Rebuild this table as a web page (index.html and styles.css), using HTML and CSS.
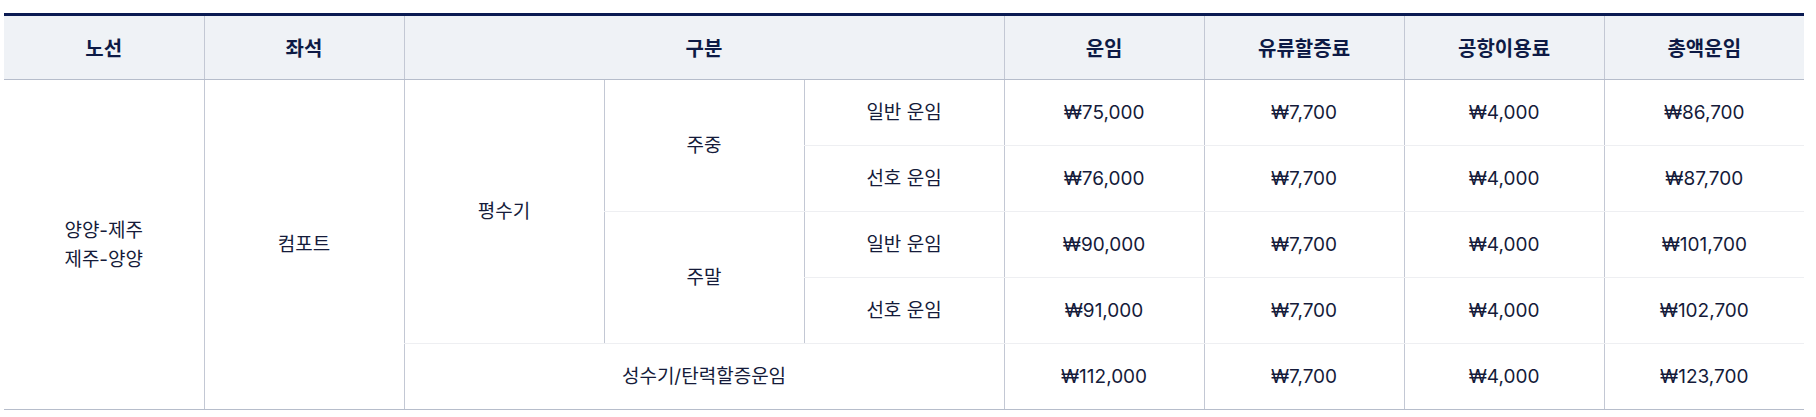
FILE: index.html
```html
<!DOCTYPE html>
<html lang="ko">
<head>
<meta charset="utf-8">
<link rel="stylesheet" href="styles.css">
</head>
<body>
<div class="wrap">
<table class="fare">
  <colgroup>
    <col><col><col><col><col><col><col><col><col>
  </colgroup>
  <thead>
    <tr>
      <th>노선</th>
      <th>좌석</th>
      <th colspan="3">구분</th>
      <th>운임</th>
      <th>유류할증료</th>
      <th>공항이용료</th>
      <th>총액운임</th>
    </tr>
  </thead>
  <tbody>
    <tr>
      <td rowspan="5" class="strong-bottom first">양양-제주<br>제주-양양</td>
      <td rowspan="5" class="strong-bottom">컴포트</td>
      <td rowspan="4">평수기</td>
      <td rowspan="2">주중</td>
      <td>일반 운임</td>
      <td>₩75,000</td>
      <td>₩7,700</td>
      <td>₩4,000</td>
      <td>₩86,700</td>
    </tr>
    <tr>
      <td>선호 운임</td>
      <td>₩76,000</td>
      <td>₩7,700</td>
      <td>₩4,000</td>
      <td>₩87,700</td>
    </tr>
    <tr>
      <td rowspan="2">주말</td>
      <td>일반 운임</td>
      <td>₩90,000</td>
      <td>₩7,700</td>
      <td>₩4,000</td>
      <td>₩101,700</td>
    </tr>
    <tr>
      <td>선호 운임</td>
      <td>₩91,000</td>
      <td>₩7,700</td>
      <td>₩4,000</td>
      <td>₩102,700</td>
    </tr>
    <tr class="last">
      <td colspan="3">성수기/탄력할증운임</td>
      <td>₩112,000</td>
      <td>₩7,700</td>
      <td>₩4,000</td>
      <td>₩123,700</td>
    </tr>
  </tbody>
</table>
</div>
</body>
</html>
```

FILE: styles.css
```css
html, body {
  margin: 0;
  padding: 0;
  background: #ffffff;
}

.wrap {
  padding: 13px 0 0 4px;
}

.fare {
  width: 1800px;
  table-layout: fixed;
  border-collapse: collapse;
  border-top: 3px solid #0a1a52;
  font-family: "Inter", "Noto Sans CJK KR", sans-serif;
  font-size: 19px;
  color: #151b3a;
  letter-spacing: 0;
}

.fare col {
  width: 200px;
}

.fare th {
  height: 63px;
  padding: 0;
  background: #eff2f6;
  font-size: 20px;
  font-weight: 700;
  color: #0d1a45;
  text-align: center;
  vertical-align: middle;
  border-left: 1px solid #c3c8d4;
  border-bottom: 1px solid #b6bdcb;
}

.fare th:first-child {
  border-left: none;
}

.fare td {
  height: 63px;
  padding: 2px 0 0;
  text-align: center;
  vertical-align: middle;
  font-weight: 400;
  line-height: 1.5;
  border-left: 1px solid #c3c8d4;
  border-bottom: 1px solid #eeeff2;
}

.fare td.first {
  border-left: none;
}

.fare tr.last td,
.fare td.strong-bottom {
  border-bottom: 1px solid #b6bdcb;
}
```
